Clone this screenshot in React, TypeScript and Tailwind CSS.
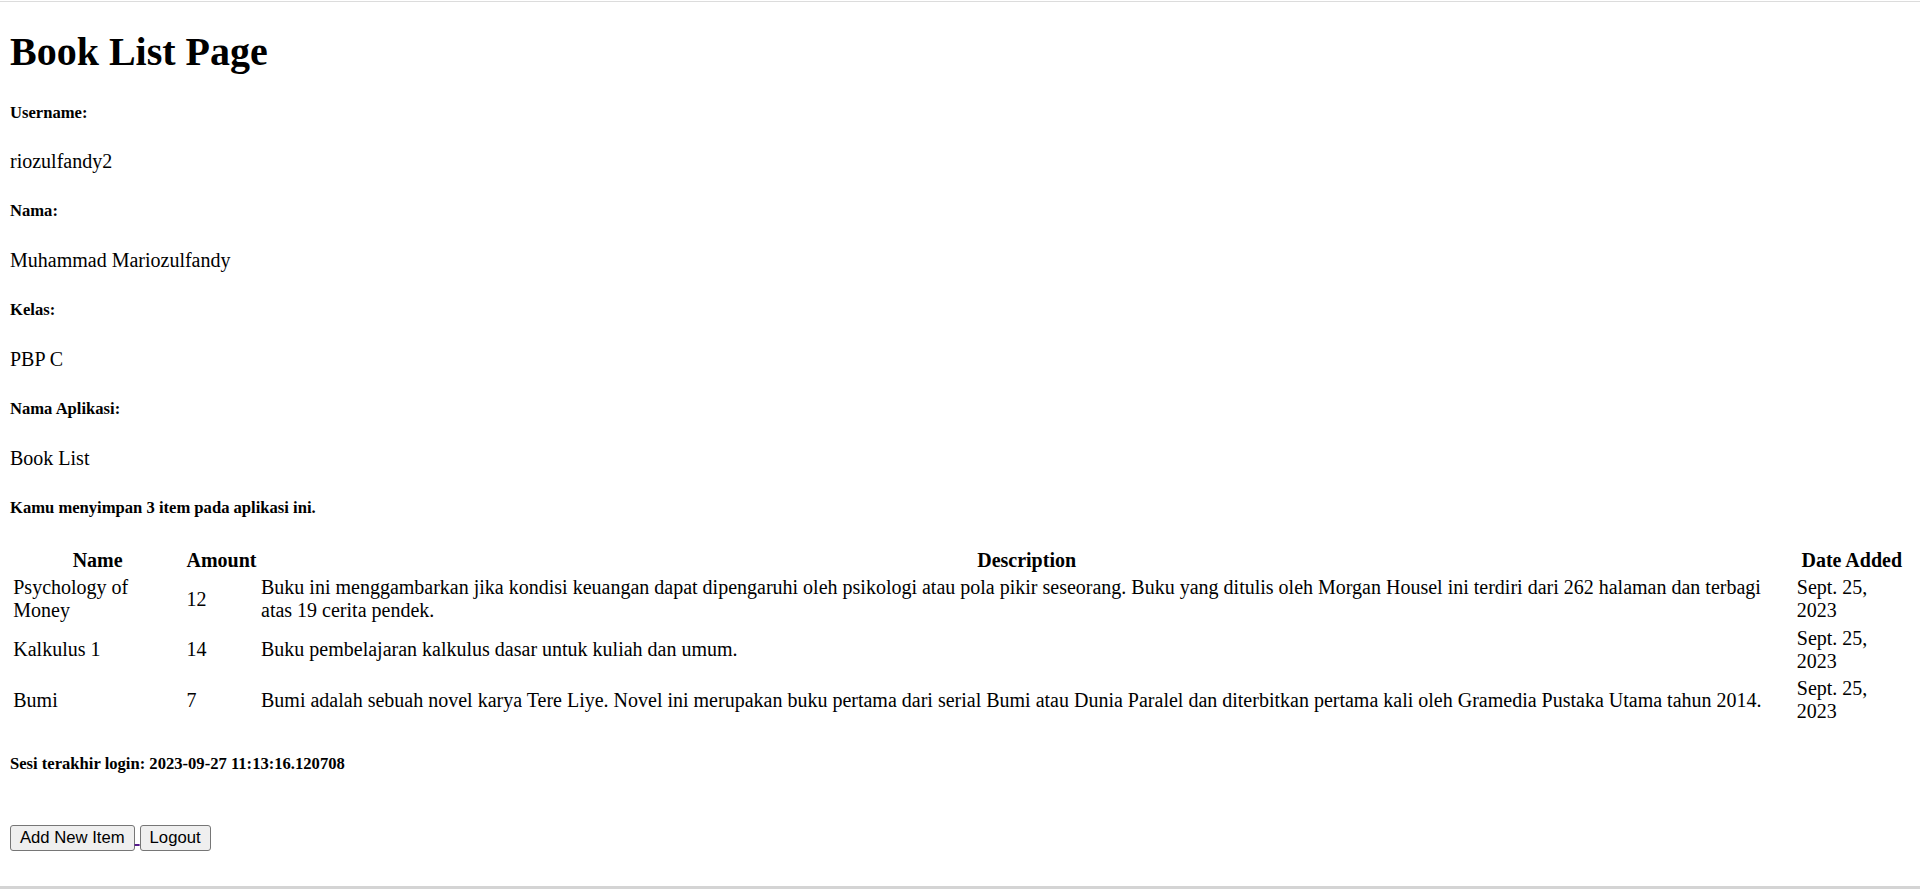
const books = [
  {
    name: 'Psychology of Money',
    amount: 12,
    description:
      'Buku ini menggambarkan jika kondisi keuangan dapat dipengaruhi oleh psikologi atau pola pikir seseorang. Buku yang ditulis oleh Morgan Housel ini terdiri dari 262 halaman dan terbagi atas 19 cerita pendek.',
    date: 'Sept. 25, 2023',
  },
  {
    name: 'Kalkulus 1',
    amount: 14,
    description: 'Buku pembelajaran kalkulus dasar untuk kuliah dan umum.',
    date: 'Sept. 25, 2023',
  },
  {
    name: 'Bumi',
    amount: 7,
    description:
      'Bumi adalah sebuah novel karya Tere Liye. Novel ini merupakan buku pertama dari serial Bumi atau Dunia Paralel dan diterbitkan pertama kali oleh Gramedia Pustaka Utama tahun 2014.',
    date: 'Sept. 25, 2023',
  },
]

const h5Class = 'my-[27.72px] text-[16.6px] font-bold leading-[19.8px]'
const pClass = 'my-[20px] leading-[23.6px]'
const buttonClass =
  'cursor-pointer rounded-[3px] border border-[#767676] bg-[#efefef] px-[9px] py-[2.75px] align-baseline font-["Liberation_Sans",Arial,sans-serif] text-[16.67px] leading-[1.15] text-black'

export default function App() {
  return (
    <div className="flex min-h-[889px] flex-col bg-white font-['Liberation_Serif','Times_New_Roman',serif] text-[20px] leading-[1.15] text-black">
      {/* frame lines from the screenshot */}
      <div className="mt-px h-px shrink-0 bg-[#dcdcdc]" />

      <div className="px-[10px] pb-[10px]">
        <h1 className="my-[26.8px] text-[40px] font-bold leading-[1.15]">Book List Page</h1>

        <h5 className={h5Class}>Username:</h5>
        <p className={pClass}>riozulfandy2</p>

        <h5 className={h5Class}>Nama:</h5>
        <p className={pClass}>Muhammad Mariozulfandy</p>

        <h5 className={h5Class}>Kelas:</h5>
        <p className={pClass}>PBP C</p>

        <h5 className={h5Class}>Nama Aplikasi:</h5>
        <p className={pClass}>Book List</p>

        <h5 className={h5Class}>Kamu menyimpan {books.length} item pada aplikasi ini.</h5>

        <table className="border-separate border-spacing-[2.5px]">
          <tbody>
            <tr>
              <th className="p-[1.25px] text-center font-bold">Name</th>
              <th className="p-[1.25px] text-center font-bold">Amount</th>
              <th className="p-[1.25px] text-center font-bold">Description</th>
              <th className="p-[1.25px] text-center font-bold">Date Added</th>
            </tr>
            {books.map((b) => (
              <tr key={b.name}>
                <td className="p-[1.25px] align-middle">{b.name}</td>
                <td className="p-[1.25px] align-middle">{b.amount}</td>
                <td className="p-[1.25px] align-middle">{b.description}</td>
                <td className="p-[1.25px] align-middle">{b.date}</td>
              </tr>
            ))}
          </tbody>
        </table>

        <h5 className={h5Class}>Sesi terakhir login: 2023-09-27 11:13:16.120708</h5>

        <div>
          <br />
          <a href="#" className="text-[#551a8b] underline">
            <button type="button" className={buttonClass}>
              Add New Item
            </button>{' '}
          </a>
          <a href="#" className="text-[#551a8b] underline">
            <button type="button" className={buttonClass}>
              Logout
            </button>
          </a>
        </div>
      </div>

      <div className="mt-auto h-[3px] shrink-0 bg-[#d4d4d4]" />
    </div>
  )
}
